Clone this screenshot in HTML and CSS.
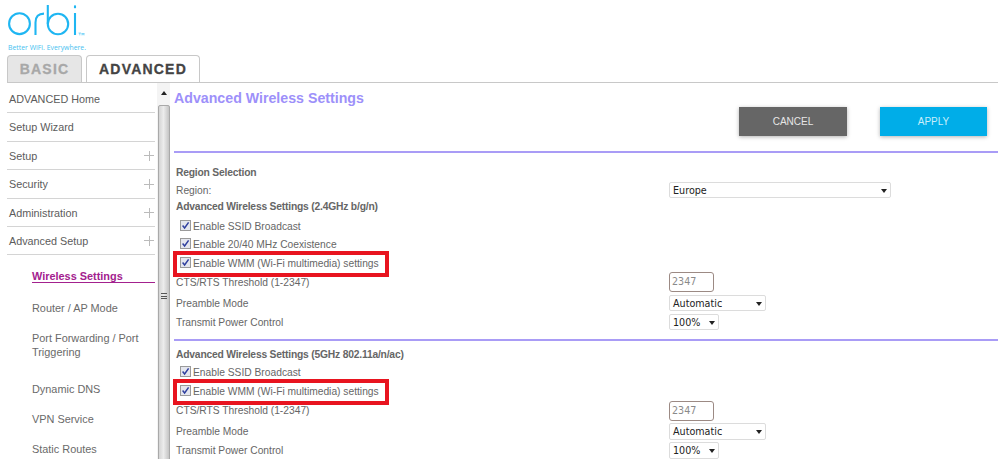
FILE: index.html
```
<!DOCTYPE html>
<html lang="en">
<head>
<meta charset="utf-8">
<title>Advanced Wireless Settings</title>
<link rel="stylesheet" href="styles.css">
</head>
<body>
<header class="top">
  <div class="brand">
    <svg class="logo" width="90" height="44" viewBox="0 0 90 44" fill="none" stroke="#1fb6f2" stroke-width="2.1">
      <circle cx="19.5" cy="23.7" r="10.4"/>
      <path d="M35.5 35V22.5C35.5 16.5 38.5 13.6 44 13.6"/>
      <path d="M47.8 5V24"/>
      <circle cx="58" cy="24" r="10.2"/>
      <path d="M75 13V35"/>
      <path d="M75 5.4V8.2"/>
      <path d="M78.5 33h2.6M79.8 33v2.4M82 35.4V33l1 1.6 1-1.6v2.4" stroke-width=".5"/>
    </svg>
    <div class="tagline">Better WiFi. Everywhere.</div>
  </div>
  <nav class="tabs">
    <div class="tab tab-basic">BASIC</div>
    <div class="tab tab-adv">ADVANCED</div>
  </nav>
</header>
<div class="body">
  <aside class="side">
    <div class="menu-item">ADVANCED Home</div>
    <div class="menu-item">Setup Wizard</div>
    <div class="menu-item">Setup<span class="plus"></span></div>
    <div class="menu-item">Security<span class="plus"></span></div>
    <div class="menu-item">Administration<span class="plus"></span></div>
    <div class="menu-item">Advanced Setup<span class="plus"></span></div>
    <div class="sub sub-active">Wireless Settings</div>
    <div class="sub sub-first">Router / AP Mode</div>
    <div class="sub sub-two">Port Forwarding / Port<br>Triggering</div>
    <div class="sub">Dynamic DNS</div>
    <div class="sub">VPN Service</div>
    <div class="sub">Static Routes</div>
  </aside>
  <div class="scroll">
    <div class="scroll-up"></div>
    <div class="scroll-thumb"><span class="grip"></span></div>
  </div>
  <main class="main">
    <h1 class="title">Advanced Wireless Settings</h1>
    <div class="actions">
      <div class="btn btn-cancel">CANCEL</div>
      <div class="btn btn-apply">APPLY</div>
    </div>
    <div class="rule rule-a"></div>

    <div class="row r-region-h"><span class="label strong">Region Selection</span></div>
    <div class="row r-region"><span class="label">Region:</span><span class="sel sel-wide">Europe</span></div>
    <div class="row r-head"><span class="label strong">Advanced Wireless Settings (2.4GHz b/g/n)</span></div>
    <div class="row r-check r-first"><span class="check"><svg width="9" height="9" viewBox="0 0 9 9"><path d="M1.6 4.6 3.6 7 7.6 1.4" fill="none" stroke="#2f3f9e" stroke-width="1.5"/></svg></span><span class="check-text">Enable SSID Broadcast</span></div>
    <div class="row r-check"><span class="check"><svg width="9" height="9" viewBox="0 0 9 9"><path d="M1.6 4.6 3.6 7 7.6 1.4" fill="none" stroke="#2f3f9e" stroke-width="1.5"/></svg></span><span class="check-text">Enable 20/40 MHz Coexistence</span></div>
    <div class="row r-wmm"><span class="check"><svg width="9" height="9" viewBox="0 0 9 9"><path d="M1.6 4.6 3.6 7 7.6 1.4" fill="none" stroke="#2f3f9e" stroke-width="1.5"/></svg></span><span class="check-text">Enable WMM (Wi-Fi multimedia) settings</span></div>
    <div class="row r-cts r-cts-tuck"><span class="label">CTS/RTS Threshold (1-2347)</span><span class="field">2347</span></div>
    <div class="row r-pre"><span class="label">Preamble Mode</span><span class="sel sel-mid">Automatic</span></div>
    <div class="row r-pre"><span class="label">Transmit Power Control</span><span class="sel sel-small">100%</span></div>
    <div class="rule rule-b"></div>

    <div class="row r-head2"><span class="label strong">Advanced Wireless Settings (5GHz 802.11a/n/ac)</span></div>
    <div class="row r-check r-low"><span class="check"><svg width="9" height="9" viewBox="0 0 9 9"><path d="M1.6 4.6 3.6 7 7.6 1.4" fill="none" stroke="#2f3f9e" stroke-width="1.5"/></svg></span><span class="check-text">Enable SSID Broadcast</span></div>
    <div class="row r-wmm r-wmm-low"><span class="check"><svg width="9" height="9" viewBox="0 0 9 9"><path d="M1.6 4.6 3.6 7 7.6 1.4" fill="none" stroke="#2f3f9e" stroke-width="1.5"/></svg></span><span class="check-text">Enable WMM (Wi-Fi multimedia) settings</span></div>
    <div class="row r-cts"><span class="label">CTS/RTS Threshold (1-2347)</span><span class="field">2347</span></div>
    <div class="row r-pre"><span class="label">Preamble Mode</span><span class="sel sel-mid">Automatic</span></div>
    <div class="row r-pre"><span class="label">Transmit Power Control</span><span class="sel sel-small">100%</span></div>
  </main>
</div>
</body>
</html>
```
FILE: styles.css
```
* { box-sizing: border-box; }
html, body { margin: 0; height: 459px; overflow: hidden; background: #fff; }
body { font-family: "Liberation Sans", Arial, sans-serif; color: #666; }

.top { height: 83px; display: flex; flex-direction: column; }
.brand { height: 56px; }
.logo { display: block; }
.tagline { font-family: "Open Sans", sans-serif; font-size: 6.9px; line-height: 10px; color: #46bff0; padding-left: 8px; margin-top: -1.5px; white-space: nowrap; }
.tabs { flex: 1; margin-left: 7px; display: flex; gap: 4px; border-bottom: 1px solid #c8c8c8; }
.tab { height: 27px; border: 1px solid #c8c8c8; border-bottom: 0; border-radius: 4px 4px 0 0; font-weight: 700; font-size: 14px; letter-spacing: 1.2px; line-height: 26px; text-align: center; -webkit-text-stroke: .3px currentColor; }
.tab-basic { width: 75px; background: #e6e6e6; color: #a8a8a8; }
.tab-adv { width: 114px; background: #fff; color: #444; }

.body { display: flex; height: 376px; overflow: hidden; }
.side { width: 157px; padding: 2px 0 0 7px; flex: none; overflow: hidden; }
.menu-item { height: 28.4px; border-bottom: 1.5px solid #d4d4d4; padding-left: 2px; font-size: 10.8px; line-height: 28.5px; color: #5c5c5c; position: relative; margin-right: 2px; }
.plus { position: absolute; right: 1px; top: 9px; width: 10px; height: 10px;
  background: linear-gradient(#bbb, #bbb) center / 10px 1px no-repeat, linear-gradient(#bbb, #bbb) center / 1px 10px no-repeat; }
.sub { margin-left: 25px; font-size: 10.9px; line-height: 30px; height: 30px; color: #6a6a6a; white-space: nowrap; }
.sub-active { margin-top: 13px; margin-right: 2px; height: 15px; line-height: 17px; font-weight: 700; color: #a3218e; border-bottom: 1px solid #a3218e; }
.sub-first { margin-top: 10px; }
.sub-two { height: 51px; line-height: 13.5px; padding-top: 9px; }

.scroll { width: 13px; flex: none; background: #f4f4f4; position: relative; }
.scroll-up { height: 18px; position: relative; }
.scroll-up::after { content: ""; position: absolute; left: 3.5px; top: 8px; border: 3px solid transparent; border-top: 0; border-bottom: 4px solid #222; }
.scroll-thumb { height: 400px; margin-top: 4px; margin-left: 1px; background: linear-gradient(90deg, #d4d4d4, #ececec 45%, #c4c4c4); border: 1px solid #a9a9a9; border-radius: 2px; position: relative; }
.grip { position: absolute; left: 2px; top: 187px; width: 6px; height: 6px; border-top: 1px solid #555; border-bottom: 1px solid #555;
  background: linear-gradient(#555, #555) center / 6px 1px no-repeat; }

.main { flex: 1; min-width: 0; padding-left: 4px; }
.title { margin: 0; padding-top: 7px; font-size: 14.2px; line-height: 16px; font-weight: 700; color: #9d90fa; white-space: nowrap; }
.actions { display: flex; justify-content: flex-end; gap: 33px; padding-right: 11px; margin-top: 1px; }
.btn { width: 107px; height: 29px; font-size: 10px; line-height: 29px; text-align: center; color: #e6e6e6; box-shadow: 0 1px 4px rgba(0,0,0,.3); }
.btn-cancel { background: #666; width: 108px; }
.btn-apply { background: #00ade8; color: #c8eefa; }
.rule { height: 1.5px; background: #a99cf6; }
.rule-a { margin-top: 15px; }
.rule-b { margin-top: 9px; }

.row { display: flex; align-items: center; height: 18px; padding-left: 2px; font-size: 10.25px; }
.label { width: 493px; flex: none; white-space: nowrap; }
.strong { font-weight: 700; font-size: 10.3px; letter-spacing: -.2px; }
.r-region-h { margin-top: 11px; height: 17px; }
.r-region { margin-top: 1px; height: 17px; }
.r-head { height: 15px; }
.r-head2 { margin-top: 6px; height: 16px; }
.r-first { margin-top: 3.5px; }
.r-check { padding-left: 6px; }
.r-low { padding-top: 1px; }
.r-wmm { height: 18px; width: max-content; margin: 2px 0 0 2.5px; padding: 0 6px 2px 3.5px; outline: 4px solid #e8141f; }
.r-wmm-low { padding-bottom: 0; }
.r-cts { height: 20px; }
.r-cts-tuck { margin-top: -1px; }
.r-pre { height: 16px; margin-top: 3px; }

.check { width: 11px; height: 11px; flex: none; margin-right: 2px; margin-top: -2px; background: #e4e6ee; border: 1px solid #9a9a9a; display: flex; align-items: center; justify-content: center; }
.check svg { display: block; }
.check-text { white-space: nowrap; }

.sel { display: block; position: relative; height: 16.5px; flex: none; background: #fff; border: 1px solid #dcdcdc; border-radius: 2px; padding-left: 3px; font-family: "DejaVu Sans", sans-serif; font-size: 9.6px; line-height: 16.5px; color: #222; }
.sel::after { content: ""; position: absolute; right: 3px; top: 6px; border: 3px solid transparent; border-bottom: 0; border-top: 4px solid #222; }
.sel-wide { width: 222px; }
.sel-mid { width: 97px; }
.sel-small { width: 50px; }
.field { display: block; flex: none; width: 45px; height: 20px; border: 1px solid #9c8a84; border-radius: 3px; padding-left: 2px; font-family: "DejaVu Sans", sans-serif; font-size: 9.6px; line-height: 18px; color: #8a8a8a; }
```
